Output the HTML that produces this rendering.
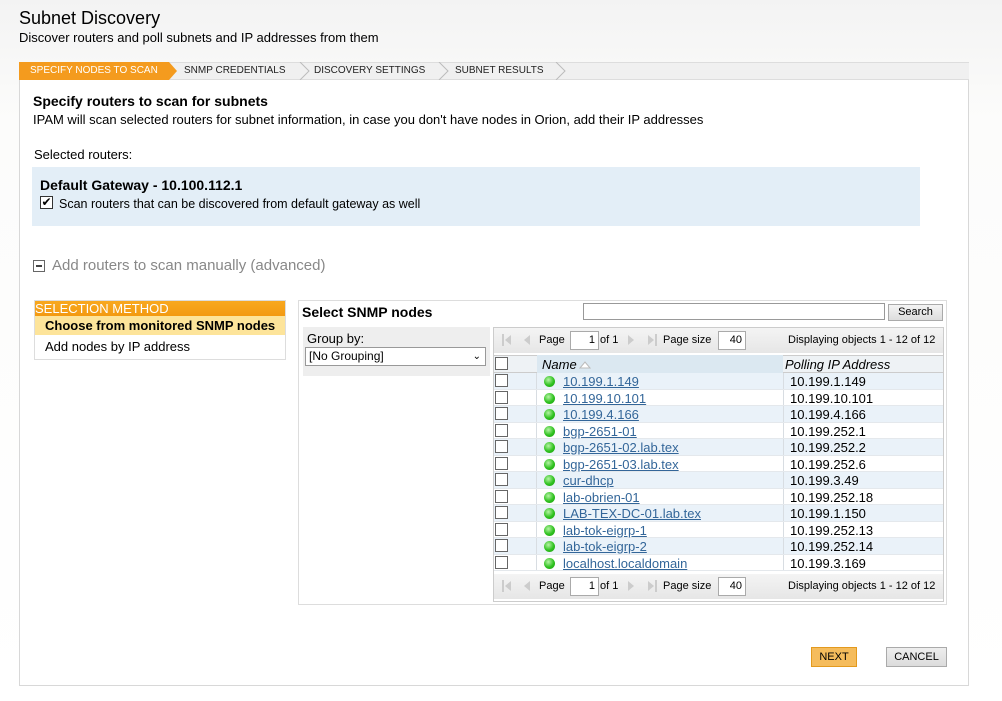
<!DOCTYPE html>
<html><head><meta charset="utf-8"><style>
*{box-sizing:border-box;margin:0;padding:0}
body{width:1002px;height:701px;position:relative;overflow:hidden;font-family:"Liberation Sans",Arial,sans-serif;color:#000;background:linear-gradient(#f3f3f3,#fcfcfb 120px,#fff)}
.a{position:absolute;white-space:nowrap}
.tab{position:absolute;top:62px;height:17px;font-size:10px;line-height:17px}
.row{position:absolute;left:494px;width:449px;height:16.5px;font-size:13px;line-height:17px;border-bottom:1px solid #e4e8ec}
.row .c1{position:absolute;left:1px;top:1px;width:13px;height:13px;border:1px solid #666;background:#fff}
.row .sep{position:absolute;left:42px;top:0;bottom:0;border-left:1px solid #d8dde2}
.row .sep2{position:absolute;left:289px;top:0;bottom:0;border-left:1px solid #d8dde2}
.row .dot{position:absolute;left:50px;top:3px;width:11px;height:11px;border-radius:50%;background:radial-gradient(circle at 40% 35%,#b6f3a6,#2fc21f 55%,#1d9a12)}
.row a{position:absolute;left:69px;top:0;color:#336699;text-decoration:underline}
.row .ip{position:absolute;left:296px;top:0}
.alt{background:#eaf2f9}
.pager{position:absolute;left:494px;width:449px;height:25px;background:linear-gradient(#f4f4f4,#e6e6e6);font-size:11px;line-height:25px}
.pager .in{position:absolute;top:3px;height:19px;border:1px solid #aaa;background:#fff;text-align:right;padding-right:3px;line-height:17px}
.ar{position:absolute;top:7px;width:0;height:0;border-top:5px solid transparent;border-bottom:5px solid transparent}
</style></head><body>
<div class="a" style="left:19px;top:8px;font-size:18px">Subnet Discovery</div>
<div class="a" style="left:19px;top:30px;font-size:13px">Discover routers and poll subnets and IP addresses from them</div>

<div class="a" style="left:19px;top:62px;width:950px;height:18px;background:#f0f0f0;border-top:1px solid #ddd;border-bottom:1px solid #ddd"></div>
<svg class="a" style="left:19px;top:62px" width="560" height="18">
<polygon points="0,0 150,0 158,9 150,18 0,18" fill="#f49b1e"/>
<polyline points="281,0 290,9 281,18" fill="none" stroke="#bbb"/>
<polyline points="420,0 429,9 420,18" fill="none" stroke="#bbb"/>
<polyline points="537,0 546,9 537,18" fill="none" stroke="#bbb"/>
</svg>
<div class="tab" style="left:30px;color:#fff">SPECIFY NODES TO SCAN</div>
<div class="tab" style="left:184px;color:#222">SNMP CREDENTIALS</div>
<div class="tab" style="left:314px;color:#222">DISCOVERY SETTINGS</div>
<div class="tab" style="left:455px;color:#222">SUBNET RESULTS</div>

<div class="a" style="left:19px;top:80px;width:950px;height:606px;background:#fff;border:1px solid #d8d8d8;border-top:none"></div>
<div class="a" style="left:33px;top:93px;font-size:14px;font-weight:bold">Specify routers to scan for subnets</div>
<div class="a" style="left:33px;top:112px;font-size:13px">IPAM will scan selected routers for subnet information, in case you don't have nodes in Orion, add their IP addresses</div>
<div class="a" style="left:34px;top:147px;font-size:13px">Selected routers:</div>
<div class="a" style="left:32px;top:167px;width:888px;height:59px;background:#e3eef7"></div>
<div class="a" style="left:40px;top:177px;font-size:14px;font-weight:bold">Default Gateway - 10.100.112.1</div>
<div class="a" style="left:40px;top:196px;width:13px;height:13px;border:1px solid #333;background:#fff;font-size:12px;line-height:11px;text-align:center">✔</div>
<div class="a" style="left:59px;top:197px;font-size:12.5px">Scan routers that can be discovered from default gateway as well</div>
<div class="a" style="left:33px;top:260px;width:12px;height:12px;border:1px solid #666;background:#fff"><div style="position:absolute;left:2px;top:4px;width:6px;height:1.5px;background:#444"></div></div>
<div class="a" style="left:52px;top:257px;font-size:15px;color:#888">Add routers to scan manually (advanced)</div>

<div class="a" style="left:34px;top:300px;width:252px;height:60px;border:1px solid #ddd;background:#fff"></div>
<div class="a" style="left:35px;top:301px;width:250px;height:15px;background:linear-gradient(#f8a81f,#f39a12);font-size:13px;color:#fff;line-height:15px">SELECTION METHOD</div>
<div class="a" style="left:35px;top:316px;width:250px;height:19px;background:#fde49a;font-size:13px;font-weight:bold;line-height:19px;padding-left:10px">Choose from monitored SNMP nodes</div>
<div class="a" style="left:45px;top:339px;font-size:13px">Add nodes by IP address</div>

<div class="a" style="left:298px;top:300px;width:649px;height:305px;border:1px solid #ddd;background:#fff"></div>
<div class="a" style="left:302px;top:304px;font-size:14px;font-weight:bold">Select SNMP nodes</div>
<div class="a" style="left:583px;top:303px;width:302px;height:17px;border:1px solid #999;background:#fff"></div>
<div class="a" style="left:888px;top:304px;width:55px;height:17px;border:1px solid #aaa;background:linear-gradient(#f4f4f4,#ddd);font-size:11px;line-height:15px;text-align:center">Search</div>
<div class="a" style="left:303px;top:327px;width:187px;height:49px;background:#eee"></div>
<div class="a" style="left:307px;top:331px;font-size:13px">Group by:</div>
<div class="a" style="left:305px;top:347px;width:181px;height:19px;border:1px solid #999;background:#fff;font-size:12px;line-height:17px;padding-left:3px">[No Grouping]<span style="position:absolute;right:4px;top:0;font-size:10px">&#8964;</span></div>
<div class="a" style="left:493px;top:327px;width:451px;height:275px;border:1px solid #ccc"></div>

<div class="pager" style="top:328px">
<span class="a" style="left:8px;top:6px;width:2px;height:12px;background:#ccc"></span><span class="ar" style="left:11px;border-right:6px solid #ccc"></span>
<span class="ar" style="left:30px;border-right:6px solid #ccc"></span>
<span class="a" style="left:45px">Page</span><span class="in" style="left:76px;width:29px">1</span><span class="a" style="left:106px">of 1</span>
<span class="ar" style="left:134px;border-left:6px solid #ccc"></span>
<span class="ar" style="left:154px;border-left:6px solid #ccc"></span><span class="a" style="left:161px;top:6px;width:2px;height:12px;background:#ccc"></span>
<span class="a" style="left:169px">Page size</span><span class="in" style="left:224px;width:28px">40</span>
<span class="a" style="left:294px">Displaying objects 1 - 12 of 12</span>
</div>
<div class="pager" style="top:574px">
<span class="a" style="left:8px;top:6px;width:2px;height:12px;background:#ccc"></span><span class="ar" style="left:11px;border-right:6px solid #ccc"></span>
<span class="ar" style="left:30px;border-right:6px solid #ccc"></span>
<span class="a" style="left:45px">Page</span><span class="in" style="left:76px;width:29px">1</span><span class="a" style="left:106px">of 1</span>
<span class="ar" style="left:134px;border-left:6px solid #ccc"></span>
<span class="ar" style="left:154px;border-left:6px solid #ccc"></span><span class="a" style="left:161px;top:6px;width:2px;height:12px;background:#ccc"></span>
<span class="a" style="left:169px">Page size</span><span class="in" style="left:224px;width:28px">40</span>
<span class="a" style="left:294px">Displaying objects 1 - 12 of 12</span>
</div>

<div class="a" style="left:494px;top:355px;width:449px;height:18px;background:#eef2f5;border-top:1px solid #ccc;border-bottom:1px solid #ccc"></div>
<div class="a" style="left:537px;top:355px;width:246px;height:18px;background:#dbe8f1"></div>
<div class="a" style="left:495px;top:357px;width:13px;height:13px;border:1px solid #666;background:#fff"></div>
<div class="a" style="left:542px;top:357px;font-size:13px;font-style:italic">Name</div>
<svg class="a" style="left:579px;top:361px" width="12" height="8"><polygon points="1,7 6,1 11,7" fill="#fff" stroke="#bbb"/></svg>
<div class="a" style="left:785px;top:357px;font-size:13px;font-style:italic">Polling IP Address</div>

<div class="row alt" style="top:373px"><i class="c1"></i><i class="sep"></i><i class="sep2"></i><i class="dot"></i><a>10.199.1.149</a><span class="ip">10.199.1.149</span></div>
<div class="row" style="top:389.5px"><i class="c1"></i><i class="sep"></i><i class="sep2"></i><i class="dot"></i><a>10.199.10.101</a><span class="ip">10.199.10.101</span></div>
<div class="row alt" style="top:406px"><i class="c1"></i><i class="sep"></i><i class="sep2"></i><i class="dot"></i><a>10.199.4.166</a><span class="ip">10.199.4.166</span></div>
<div class="row" style="top:422.5px"><i class="c1"></i><i class="sep"></i><i class="sep2"></i><i class="dot"></i><a>bgp-2651-01</a><span class="ip">10.199.252.1</span></div>
<div class="row alt" style="top:439px"><i class="c1"></i><i class="sep"></i><i class="sep2"></i><i class="dot"></i><a>bgp-2651-02.lab.tex</a><span class="ip">10.199.252.2</span></div>
<div class="row" style="top:455.5px"><i class="c1"></i><i class="sep"></i><i class="sep2"></i><i class="dot"></i><a>bgp-2651-03.lab.tex</a><span class="ip">10.199.252.6</span></div>
<div class="row alt" style="top:472px"><i class="c1"></i><i class="sep"></i><i class="sep2"></i><i class="dot"></i><a>cur-dhcp</a><span class="ip">10.199.3.49</span></div>
<div class="row" style="top:488.5px"><i class="c1"></i><i class="sep"></i><i class="sep2"></i><i class="dot"></i><a>lab-obrien-01</a><span class="ip">10.199.252.18</span></div>
<div class="row alt" style="top:505px"><i class="c1"></i><i class="sep"></i><i class="sep2"></i><i class="dot"></i><a>LAB-TEX-DC-01.lab.tex</a><span class="ip">10.199.1.150</span></div>
<div class="row" style="top:521.5px"><i class="c1"></i><i class="sep"></i><i class="sep2"></i><i class="dot"></i><a>lab-tok-eigrp-1</a><span class="ip">10.199.252.13</span></div>
<div class="row alt" style="top:538px"><i class="c1"></i><i class="sep"></i><i class="sep2"></i><i class="dot"></i><a>lab-tok-eigrp-2</a><span class="ip">10.199.252.14</span></div>
<div class="row" style="top:554.5px"><i class="c1"></i><i class="sep"></i><i class="sep2"></i><i class="dot"></i><a>localhost.localdomain</a><span class="ip">10.199.3.169</span></div>

<div class="a" style="left:811px;top:647px;width:46px;height:20px;background:#f5bc5c;border:1px solid #e39a1e;font-size:11px;line-height:18px;text-align:center">NEXT</div>
<div class="a" style="left:886px;top:647px;width:61px;height:20px;background:linear-gradient(#eee,#dcdcdc);border:1px solid #aaa;font-size:11px;line-height:18px;text-align:center">CANCEL</div>
</body></html>
